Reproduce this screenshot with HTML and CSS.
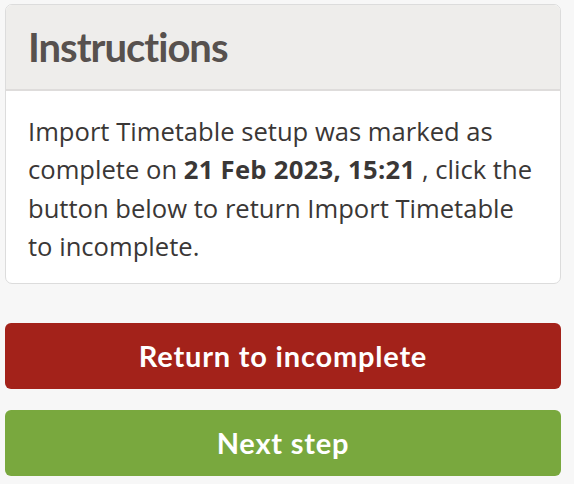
FILE: index.html
```html
<!DOCTYPE html>
<html lang="en">
<head>
<meta charset="utf-8">
<title>Instructions</title>
<link rel="stylesheet" href="styles.css">
</head>
<body>
<main class="page">
  <section class="card">
    <header class="card-header">
      <h2 class="card-title">Instructions</h2>
    </header>
    <div class="card-body">
      <p class="card-text">Import Timetable setup was marked as complete on <strong>21 Feb 2023, 15:21</strong> , click the button below to return Import Timetable to incomplete.</p>
    </div>
  </section>
  <div class="actions">
    <button class="btn btn-red" type="button">Return to incomplete</button>
    <button class="btn btn-green" type="button">Next step</button>
  </div>
</main>
</body>
</html>
```
FILE: styles.css
```css
* { box-sizing: border-box; }
html, body { margin: 0; padding: 0; }
body {
  background: #f7f7f7;
  font-family: Lato, "Open Sans", sans-serif;
  color: #3b3735;
}
.page {
  width: 556px;
  margin: 4px 0 0 5px;
  display: flex;
  flex-direction: column;
}
.card {
  background: #ffffff;
  border: 1px solid #dcdcdc;
  border-radius: 7px;
  overflow: hidden;
}
.card-header {
  background: #eeedeb;
  border-bottom: 2px solid #dedcdb;
  height: 86px;
  display: flex;
  align-items: center;
  padding: 0 22px;
}
.card-title {
  margin: 0;
  font-size: 40px;
  font-weight: 700;
  letter-spacing: -1px;
  color: #57514e;
  line-height: 1;
}
.card-body {
  padding: 22px 22px 16px 22px;
}
.card-text {
  margin: 0;
  font-family: "Open Sans", Lato, sans-serif;
  font-size: 25.6px;
  line-height: 38.4px;
  color: #3a3736;
}
.card-text strong {
  font-weight: 700;
  letter-spacing: 0.3px;
}
.actions {
  display: flex;
  flex-direction: column;
  gap: 21px;
  margin-top: 39px;
}
.btn {
  height: 66px;
  border: none;
  border-radius: 6px;
  color: #ffffff;
  font-family: Lato, "Open Sans", sans-serif;
  font-size: 29px;
  font-weight: 700;
  letter-spacing: 0.8px;
  cursor: pointer;
}
.btn-red { background: #a3221a; }
.btn-green { background: #79a83e; }
```
